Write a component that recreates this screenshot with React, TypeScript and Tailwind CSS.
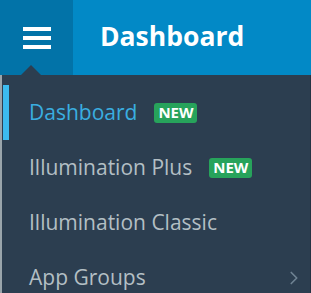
import { ChevronRight } from 'lucide-react';

const items = [
  { label: 'Dashboard', badge: true, active: true },
  { label: 'Illumination Plus', badge: true, active: false },
  { label: 'Illumination Classic', badge: false, active: false },
  { label: 'App Groups', badge: false, active: false, chevron: true },
];

export default function App() {
  return (
    <div
      className="w-[311px] h-[293px] overflow-hidden bg-[#2c3e50]"
      style={{ fontFamily: '"Open Sans", "Noto Sans", sans-serif' }}
    >
      {/* Top bar */}
      <div className="flex h-[75px]">
        <div className="relative w-[73px] bg-[#0273a8] flex flex-col items-center justify-center gap-[5px]">
          <span className="block w-[28px] h-[4px] bg-white" />
          <span className="block w-[28px] h-[4px] bg-white" />
          <span className="block w-[28px] h-[4px] bg-white" />
          {/* pointer */}
          <span className="absolute bottom-0 left-[21px] w-0 h-0 border-l-[10px] border-r-[10px] border-b-[10px] border-l-transparent border-r-transparent border-b-[#2c3e50]" />
        </div>
        <div className="flex-1 bg-[#0289c6] flex items-center pl-[27px] pb-[1px]">
          <span className="text-white text-[26.5px] font-bold">Dashboard</span>
        </div>
      </div>

      {/* Menu */}
      <div className="h-[218px] border-l-2 border-r border-l-[#9aa5ab] border-r-[#243444] pt-[10px]">
        {items.map((item) => (
          <div key={item.label} className="relative h-[55px] flex items-center pl-[27px] pr-[5px]">
            {item.active && <span className="absolute left-[1px] top-0 w-[6px] h-full bg-[#3cbcf0]" />}
            <span
              className={`text-[21px] ${item.active ? 'text-[#3aaee0]' : 'text-[#b3bfc4]'}`}
            >
              {item.label}
            </span>
            {item.badge && (
              <span className="ml-[17px] h-[20px] px-[4px] flex items-center rounded-[3px] bg-[#27a35b] text-white text-[15px] font-bold leading-none">
                NEW
              </span>
            )}
            {item.chevron && (
              <ChevronRight size={22} strokeWidth={1.8} className="ml-auto text-[#6f8393]" />
            )}
          </div>
        ))}
      </div>
    </div>
  );
}
